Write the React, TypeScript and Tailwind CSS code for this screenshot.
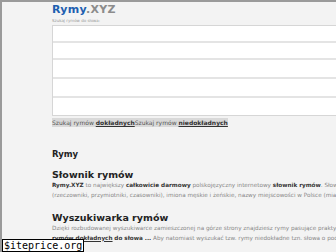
import React from "react";

const font = { fontFamily: '"DejaVu Sans", Verdana, sans-serif' };

export default function App() {
  return (
    <div
      className="relative w-[336px] h-[252px] overflow-hidden bg-[#f3f3f3] border-t-2 border-l-2 border-[#9a9a9a]"
      style={font}
    >
      <div className="pl-[50px] w-[420px]">
        <div className="pt-[1px] h-[16px] text-[11px] leading-[14px] font-bold tracking-[0.3px] whitespace-nowrap">
          <span className="text-[#1d5fb0]">Rymy</span>
          <span className="text-[#8c8c8c]">.XYZ</span>
        </div>
        <div className="h-[6px] text-[4px] leading-[6px] text-[#9a9a9a]">Szukaj rymów do słowa:</div>
        <div className="mt-[1px] bg-white border border-[#d6d6d6] flex flex-col">
          <div className="h-[17px] border-b-2 border-[#e4e4e4]"></div>
          <div className="h-[17px] border-b-2 border-[#e4e4e4]"></div>
          <div className="h-[19px] border-b-2 border-[#e4e4e4]"></div>
          <div className="h-[19px] border-b-2 border-[#e4e4e4]"></div>
          <div className="h-[17px]"></div>
        </div>
        <div className="mt-[2px] w-fit bg-[#d9d9d9] h-[9px] text-[6px] leading-[9px] text-[#555] whitespace-nowrap">
          Szukaj rymów <b className="underline text-[#333]">dokładnych</b>Szukaj rymów{" "}
          <b className="underline text-[#333]">niedokładnych</b>
        </div>
        <div className="mt-[22px] text-[8.5px] leading-[10px] font-bold text-[#222]">Rymy</div>
        <div className="mt-[10px] text-[9.5px] leading-[12px] font-bold text-[#222]">Słownik rymów</div>
        <div className="text-[5.7px] leading-[9.5px] text-[#888] whitespace-nowrap">
          <div>
            <b className="text-[#333]">Rymy.XYZ</b> to największy <b className="text-[#333]">całkowicie darmowy</b> polskojęzyczny internetowy <b className="text-[#333]">słownik rymów</b>. Słownik zawiera
          </div>
          <div>(rzeczowniki, przymiotniki, czasowniki), imiona męskie i żeńskie, nazwy miejscowości w Polsce (miasta i wsie)</div>
        </div>
        <div className="mt-[12px] text-[9.5px] leading-[12px] font-bold text-[#222]">Wyszukiwarka rymów</div>
        <div className="text-[5.7px] leading-[9.5px] text-[#888] whitespace-nowrap">
          <div>Dzięki rozbudowanej wyszukiwarce zamieszczonej na górze strony znajdziesz rymy pasujące praktycznie do</div>
          <div>
            <b className="underline text-[#333]">rymów dokładnych</b> <b className="text-[#333]">do słowa ...</b> Aby natomiast wyszukać tzw. rymy niedokładne tzn. słowa o podobnym
          </div>
        </div>
      </div>
      <div
        className="absolute left-0 bottom-0 bg-white border border-black px-[1px] text-[10px] leading-[11px] text-black"
        style={{ fontFamily: '"DejaVu Sans Mono", monospace' }}
      >
        $iteprice.org
      </div>
    </div>
  );
}
